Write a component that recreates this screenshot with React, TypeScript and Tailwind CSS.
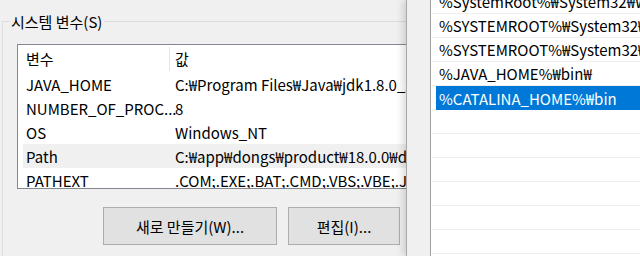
import React from "react";

const font = { fontFamily: '"Noto Sans CJK KR", "Noto Sans", sans-serif' };

const rows = [
  ["JAVA_HOME", "C:₩Program Files₩Java₩jdk1.8.0_211"],
  ["NUMBER_OF_PROC...", "8"],
  ["OS", "Windows_NT"],
  ["Path", "C:₩app₩dongs₩product₩18.0.0₩dbhomeXE₩bin"],
  ["PATHEXT", ".COM;.EXE;.BAT;.CMD;.VBS;.VBE;.JS;.JSE;.WSF"],
];

const rightRows = [
  "%SystemRoot%₩System32₩Wbem",
  "%SYSTEMROOT%₩System32₩WindowsPowerShell₩v1.0₩",
  "%SYSTEMROOT%₩System32₩OpenSSH₩",
  "%JAVA_HOME%₩bin₩",
  "%CATALINA_HOME%₩bin",
  "",
  "",
  "",
  "",
  "",
  "",
];

export default function App() {
  return (
    <div
      className="relative w-[640px] h-[256px] overflow-hidden bg-[#f0f0f0] text-[15px] text-black leading-none"
      style={font}
    >
      {/* group box */}
      <div className="relative ml-[2px] mt-[21px] w-[700px] h-[300px] border-l border-t border-[#dcdcdc]">
        <div className="absolute left-[6px] top-[-10px] bg-[#f0f0f0] px-[2px] h-[18px] flex items-center">
          시스템 변수(S)
        </div>
        {/* list view */}
        <div className="ml-[14px] mt-[22px] w-[500px] h-[145px] border border-[#828790] bg-white overflow-hidden">
          <div className="flex h-[27px] items-center">
            <div className="w-[152px] h-[24px] pl-[8px] flex items-center border-r border-[#e5e5e5]">변수</div>
            <div className="pl-[5px] flex items-center">값</div>
          </div>
          {rows.map(([k, v], i) => (
            <div
              key={k}
              className={`ml-[5px] h-[24px] flex items-center whitespace-nowrap ${i === 3 ? "bg-[#f0f0f0]" : ""}`}
            >
              <div className="w-[152px] pl-[3px]">{k}</div>
              <div>{v}</div>
            </div>
          ))}
        </div>
        {/* buttons */}
        <div className="flex gap-[11px] ml-[100px] mt-[18px]">
          <div className="w-[174px] h-[38px] border border-[#adadad] bg-[#e1e1e1] flex items-center justify-center">
            새로 만들기(W)...
          </div>
          <div className="w-[112px] h-[38px] border border-[#adadad] bg-[#e1e1e1] flex items-center justify-center">
            편집(I)...
          </div>
        </div>
      </div>

      {/* overlapping window */}
      <div className="absolute left-[406px] top-0 w-[234px] h-[256px] bg-[#f0f0f0] border-l border-[#a8a8a8] shadow-[-4px_0_6px_rgba(0,0,0,0.12)] flex">
        <div className="ml-[23px] flex-1 border-l border-[#a0a0a0] bg-white overflow-hidden">
          <div className="mt-[-10px]">
            {rightRows.map((r, i) => (
              <div key={i} className="h-[24px] border-b border-[#f0f0f0] whitespace-nowrap">
                {i === 4 ? (
                  <div className="ml-[5px] h-[24px] bg-[#0078d7] text-white pl-[3px] flex items-center">{r}</div>
                ) : (
                  <div className="ml-[5px] h-[23px] pl-[3px] flex items-center">{r}</div>
                )}
              </div>
            ))}
          </div>
        </div>
      </div>
    </div>
  );
}
